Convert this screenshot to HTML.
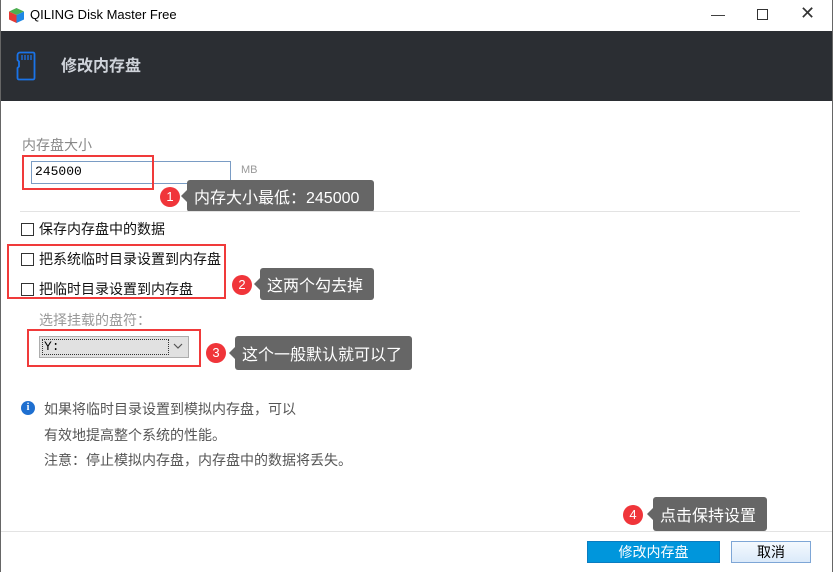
<!DOCTYPE html>
<html><head><meta charset="utf-8"><style>
*{margin:0;padding:0;box-sizing:border-box}
body{width:833px;height:572px;background:#fff;position:relative;overflow:hidden;font-family:"Liberation Sans","Microsoft YaHei","Noto Sans CJK SC",sans-serif;}
.a{position:absolute;white-space:nowrap}
.red{position:absolute;border:2px solid #f03a3a}
.dot{position:absolute;width:20px;height:20px;border-radius:50%;background:#f0353a;color:#fff;font-size:13px;text-align:center;line-height:20px}
.tip{position:absolute;background:#666;color:#fff;font-size:16px;border-radius:3px;padding-left:7px;display:flex;align-items:center}
.tip:before{content:"";position:absolute;left:-6px;top:50%;margin-top:-6px;border:6px solid transparent;border-right-color:#666;border-left:0}
.cb{position:absolute;font-size:14px;color:#111;display:flex;align-items:center}
.cb i{display:inline-block;width:13px;height:13px;border:1px solid #333;margin-right:5px}
</style></head><body>
<div class="a" style="left:0;top:0;width:1px;height:572px;background:#666"></div>
<div class="a" style="right:0;top:0;width:1px;height:572px;background:#666"></div>
<svg class="a" style="left:8px;top:7px" width="17" height="17" viewBox="0 0 17 17"><polygon points="8.5,1 16,4.5 8.5,8 1,4.5" fill="#4caf50"/><polygon points="1,4.5 8.5,8 8.5,16 1,12.5" fill="#e53935"/><polygon points="16,4.5 8.5,8 8.5,16 16,12.5" fill="#1e88e5"/></svg>
<div class="a" style="left:30px;top:7px;font-size:13px;color:#000">QILING Disk Master Free</div>
<div class="a" style="left:711px;top:6px;font-size:14px;color:#333">—</div>
<div class="a" style="left:757px;top:9px;width:11px;height:11px;border:1px solid #333"></div>
<div class="a" style="left:800px;top:3px;font-size:18px;color:#333">✕</div>
<div class="a" style="left:1px;top:31px;width:831px;height:70px;background:#2b2e33"></div>
<svg class="a" style="left:16px;top:51px" width="20" height="30" viewBox="0 0 20 30"><path d="M4 1.5h13a1.5 1.5 0 0 1 1.5 1.5v24a1.5 1.5 0 0 1-1.5 1.5H3a1.5 1.5 0 0 1-1.5-1.5V17l1.5-1.5v-5L1.5 9V4A2.5 2.5 0 0 1 4 1.5z" fill="none" stroke="#1a73e8" stroke-width="1.8"/><path d="M6 4v5M9 4v5M12 4v5M15 4v5" stroke="#1a73e8" stroke-width="1.3"/></svg>
<div class="a" style="left:61px;top:52px;font-size:16px;font-weight:bold;color:#cfd3da">修改内存盘</div>
<div class="a" style="left:22px;top:135px;font-size:14px;color:#888">内存盘大小</div>
<div class="a" style="left:31px;top:161px;width:200px;height:23px;border:1px solid #7a9cc4"></div>
<div class="a" style="left:35px;top:163px;font-size:13px;color:#000;font-family:'Liberation Mono',monospace;line-height:18px">245000</div>
<div class="a" style="left:241px;top:164px;font-size:11px;color:#999">MB</div>
<div class="red" style="left:22px;top:155px;width:132px;height:35px"></div>
<div class="dot" style="left:160px;top:187px">1</div>
<div class="tip" style="left:187px;top:180px;width:187px;height:32px">内存大小最低：245000</div>
<div class="a" style="left:20px;top:211px;width:780px;height:1px;background:#e3e3e3"></div>
<div class="cb" style="left:21px;top:219px"><i></i>保存内存盘中的数据</div>
<div class="cb" style="left:21px;top:249px"><i></i>把系统临时目录设置到内存盘</div>
<div class="cb" style="left:21px;top:279px"><i></i>把临时目录设置到内存盘</div>
<div class="red" style="left:7px;top:244px;width:219px;height:55px"></div>
<div class="dot" style="left:232px;top:275px">2</div>
<div class="tip" style="left:260px;top:268px;width:114px;height:32px">这两个勾去掉</div>
<div class="a" style="left:39px;top:310px;font-size:14px;color:#999">选择挂载的盘符：</div>
<div class="a" style="left:39px;top:336px;width:150px;height:22px;background:#e1e1e1;border:1px solid #adadad"></div>
<div class="a" style="left:42px;top:339px;width:127px;height:16px;border:1px dotted #333;font-family:'Liberation Mono',monospace;font-size:13px;line-height:14px;padding-left:1px">Y:</div>
<svg class="a" style="left:173px;top:343px" width="10" height="7"><path d="M1 1l4 4 4-4" fill="none" stroke="#555" stroke-width="1.2"/></svg>
<div class="red" style="left:27px;top:329px;width:174px;height:38px"></div>
<div class="dot" style="left:206px;top:343px">3</div>
<div class="tip" style="left:235px;top:336px;width:177px;height:34px">这个一般默认就可以了</div>
<div class="a" style="left:21px;top:401px;width:14px;height:14px;border-radius:50%;background:#1e6fd0;color:#fff;font-size:10px;font-weight:bold;text-align:center;line-height:14px;font-family:'Liberation Serif',serif">i</div>
<div class="a" style="left:44px;top:397px;font-size:14px;color:#555;line-height:25.5px">如果将临时目录设置到模拟内存盘，可以<br>有效地提高整个系统的性能。<br>注意：停止模拟内存盘，内存盘中的数据将丢失。</div>
<div class="dot" style="left:623px;top:505px">4</div>
<div class="tip" style="left:653px;top:497px;width:114px;height:34px">点击保持设置</div>
<div class="a" style="left:1px;top:531px;width:831px;height:1px;background:#e3e3e3"></div>
<div class="a" style="left:587px;top:541px;width:133px;height:22px;background:#0096dc;border:1px solid #0a7cc0;color:#fff;font-size:14px;text-align:center;line-height:20px">修改内存盘</div>
<div class="a" style="left:731px;top:541px;width:80px;height:22px;background:linear-gradient(#f4f9fe,#dbeafa);border:1px solid #7ea6d6;color:#000;font-size:14px;text-align:center;line-height:20px">取消</div>
</body></html>
